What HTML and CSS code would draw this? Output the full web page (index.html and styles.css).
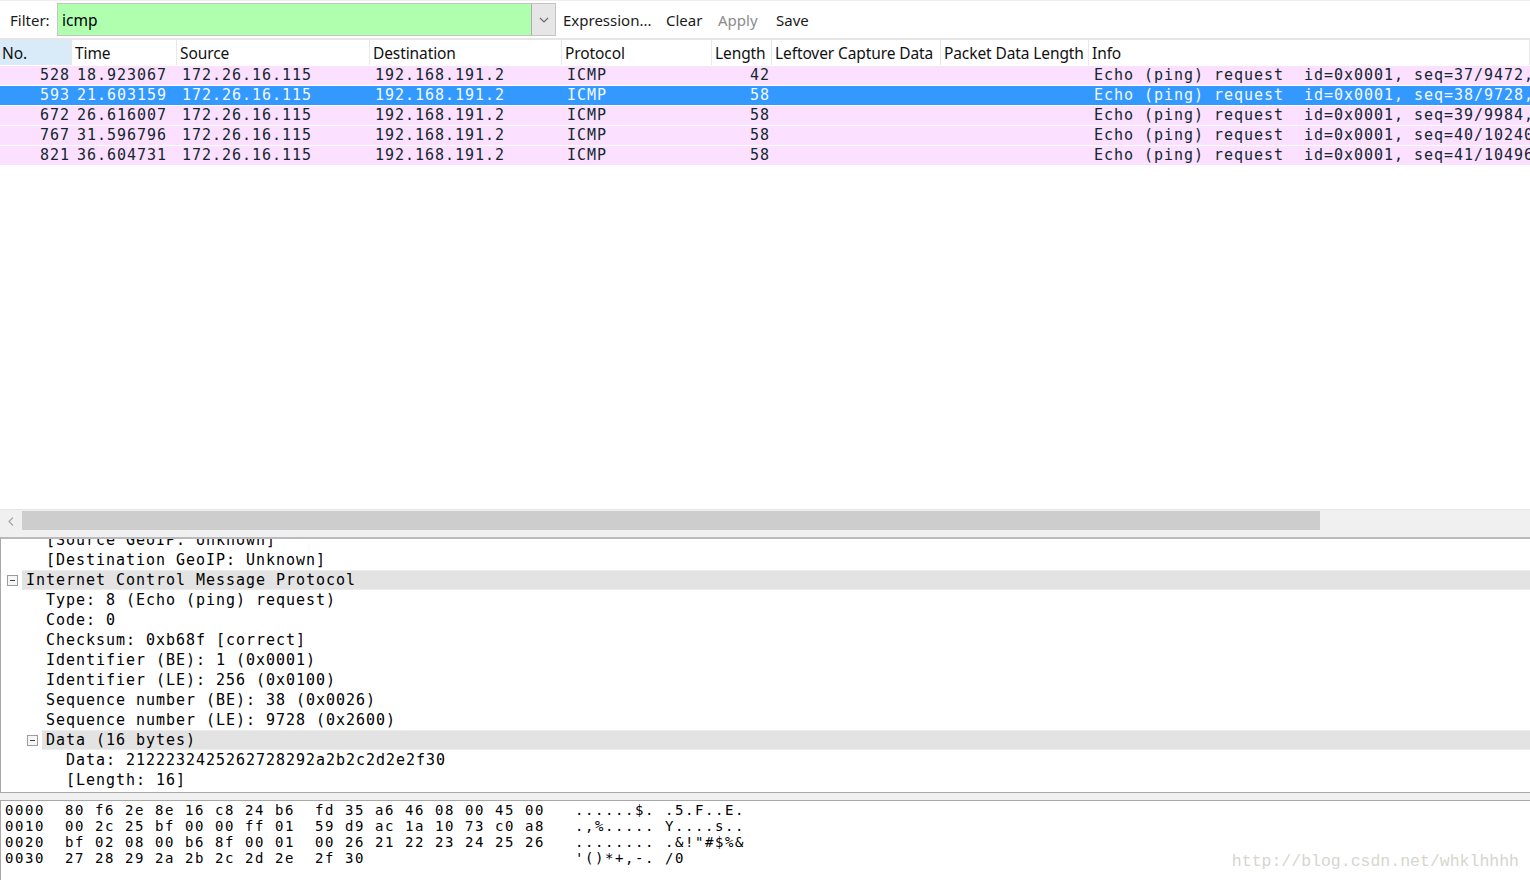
FILE: index.html
```html
<!DOCTYPE html>
<html>
<head>
<meta charset="utf-8">
<title>Wireshark</title>
<link rel="stylesheet" href="styles.css">
</head>
<body>
<div class="app">
  <div class="toolbar">
    <span class="flabel">Filter:</span>
    <div class="filter">
      <div class="finput">icmp</div>
      <div class="fdrop"><svg width="10" height="6" viewBox="0 0 10 6"><path d="M1 1 L5 5 L9 1" fill="none" stroke="#6a6a6a" stroke-width="1.2"/></svg></div>
    </div>
    <span class="tbtn w-expr">Expression...</span>
    <span class="tbtn w-clear">Clear</span>
    <span class="tbtn w-apply disabled">Apply</span>
    <span class="tbtn">Save</span>
  </div>

  <div class="plist">
    <div class="prow head">
      <div class="c sorted">No.</div>
      <div class="c">Time</div>
      <div class="c">Source</div>
      <div class="c">Destination</div>
      <div class="c">Protocol</div>
      <div class="c">Length</div>
      <div class="c">Leftover Capture Data</div>
      <div class="c">Packet Data Length</div>
      <div class="c">Info</div>
    </div>
    <div class="prow pkt">
      <div class="c r">528</div><div class="c">18.923067</div><div class="c">172.26.16.115</div><div class="c">192.168.191.2</div><div class="c">ICMP</div><div class="c r">42</div><div class="c"></div><div class="c"></div><div class="c info">Echo (ping) request  id=0x0001, seq=37/9472, ttl=64 (no response found!)</div>
    </div>
    <div class="prow pkt sel">
      <div class="c r">593</div><div class="c">21.603159</div><div class="c">172.26.16.115</div><div class="c">192.168.191.2</div><div class="c">ICMP</div><div class="c r">58</div><div class="c"></div><div class="c"></div><div class="c info">Echo (ping) request  id=0x0001, seq=38/9728, ttl=255 (no response found!)</div>
    </div>
    <div class="prow pkt">
      <div class="c r">672</div><div class="c">26.616007</div><div class="c">172.26.16.115</div><div class="c">192.168.191.2</div><div class="c">ICMP</div><div class="c r">58</div><div class="c"></div><div class="c"></div><div class="c info">Echo (ping) request  id=0x0001, seq=39/9984, ttl=255 (no response found!)</div>
    </div>
    <div class="prow pkt">
      <div class="c r">767</div><div class="c">31.596796</div><div class="c">172.26.16.115</div><div class="c">192.168.191.2</div><div class="c">ICMP</div><div class="c r">58</div><div class="c"></div><div class="c"></div><div class="c info">Echo (ping) request  id=0x0001, seq=40/10240, ttl=255 (no response found!)</div>
    </div>
    <div class="prow pkt">
      <div class="c r">821</div><div class="c">36.604731</div><div class="c">172.26.16.115</div><div class="c">192.168.191.2</div><div class="c">ICMP</div><div class="c r">58</div><div class="c"></div><div class="c"></div><div class="c info">Echo (ping) request  id=0x0001, seq=41/10496, ttl=255 (no response found!)</div>
    </div>
  </div>

  <div class="hscroll">
    <span class="arrow"><svg width="6" height="9" viewBox="0 0 6 9"><path d="M5 0.5 L1 4.5 L5 8.5" fill="none" stroke="#a6a6a6" stroke-width="1.2"/></svg></span>
    <div class="track"><div class="thumb"></div></div>
  </div>

  <div class="details">
    <div class="tree">
      <div class="tl lv1"><span class="slot"></span><span class="lbl">[Source GeoIP: Unknown]</span></div>
      <div class="tl lv1"><span class="slot"></span><span class="lbl">[Destination GeoIP: Unknown]</span></div>
      <div class="tl lv0"><span class="slot"><span class="exp"></span></span><span class="lbl hl">Internet Control Message Protocol</span></div>
      <div class="tl lv1"><span class="slot"></span><span class="lbl">Type: 8 (Echo (ping) request)</span></div>
      <div class="tl lv1"><span class="slot"></span><span class="lbl">Code: 0</span></div>
      <div class="tl lv1"><span class="slot"></span><span class="lbl">Checksum: 0xb68f [correct]</span></div>
      <div class="tl lv1"><span class="slot"></span><span class="lbl">Identifier (BE): 1 (0x0001)</span></div>
      <div class="tl lv1"><span class="slot"></span><span class="lbl">Identifier (LE): 256 (0x0100)</span></div>
      <div class="tl lv1"><span class="slot"></span><span class="lbl">Sequence number (BE): 38 (0x0026)</span></div>
      <div class="tl lv1"><span class="slot"></span><span class="lbl">Sequence number (LE): 9728 (0x2600)</span></div>
      <div class="tl lv1"><span class="slot"><span class="exp"></span></span><span class="lbl hl">Data (16 bytes)</span></div>
      <div class="tl lv2"><span class="slot"></span><span class="lbl">Data: 2122232425262728292a2b2c2d2e2f30</span></div>
      <div class="tl lv2"><span class="slot"></span><span class="lbl">[Length: 16]</span></div>
    </div>
  </div>

  <div class="gap"></div>

  <div class="bytes">
<pre class="hex">0000  80 f6 2e 8e 16 c8 24 b6  fd 35 a6 46 08 00 45 00   ......$. .5.F..E.
0010  00 2c 25 bf 00 00 ff 01  59 d9 ac 1a 10 73 c0 a8   .,%..... Y....s..
0020  bf 02 08 00 b6 8f 00 01  00 26 21 22 23 24 25 26   ........ .&amp;!&quot;#$%&amp;
0030  27 28 29 2a 2b 2c 2d 2e  2f 30                     &#39;()*+,-. /0</pre>
  </div>

  <div class="watermark">http://blog.csdn.net/whklhhhh</div>
</div>
</body>
</html>
```

FILE: styles.css
```css
* { box-sizing: border-box; margin: 0; padding: 0; }
html, body { width: 1530px; height: 880px; overflow: hidden; background: #fff; }
body {
  font-family: "Noto Sans", "Open Sans", "Liberation Sans", sans-serif;
  font-size: 15px;
  color: #000;
}
.app { position: relative; display: flex; flex-direction: column; height: 880px; width: 1530px; }

/* toolbar */
.toolbar {
  height: 40px;
  flex: 0 0 40px;
  display: flex;
  align-items: center;
  padding-left: 10px;
  border-top: 1px solid #efefef;
  border-bottom: 2px solid #e6e6e6;
}
.flabel { width: 47px; color: #1a1a1a; }
.filter {
  display: flex;
  width: 499px;
  height: 33px;
  border: 1px solid #c4c4c4;
  margin-right: 7px;
}
.finput {
  flex: 1;
  background: #afffaf;
  padding-left: 4px;
  display: flex;
  align-items: center;
  font-size: 15.5px;
  color: #000;
}
.fdrop {
  width: 24px;
  background: #e6e6e6;
  border-left: 1px solid #adadad;
  display: flex;
  align-items: center;
  justify-content: center;
}
.tbtn { display: inline-block; color: #1a1a1a; }
.w-expr { width: 103px; }
.w-clear { width: 52px; }
.w-apply { width: 58px; }
.disabled { color: #8c8c8c; }

/* packet list */
.plist { flex: 1 1 auto; overflow: hidden; }
.prow {
  display: grid;
  grid-template-columns: 72px 105px 193px 192px 150px 60px 169px 148px 1fr;
  white-space: nowrap;
}
.prow .c { overflow: hidden; }
.head { height: 26px; border-bottom: 1px solid #fff; font-size: 15.5px; letter-spacing: -0.1px; }
.head .c {
  padding-left: 3px;
  padding-top: 2px;
  line-height: 23px;
  border-right: 1px solid #e8e8e8;
  color: #111;
}
.head .c.sorted { background: #d9ebf9; padding-left: 2px; }
.pkt {
  height: 20px;
  background: #fce0ff;
  color: #12272e;
  border-bottom: 1px solid #fff;
  font-family: "DejaVu Sans Mono", "Liberation Mono", monospace;
  font-size: 15px;
  letter-spacing: 0.97px;
  line-height: 19px;
}
.pkt .c { padding-left: 5px; white-space: pre; }
.pkt .c.r { text-align: right; padding-left: 0; padding-right: 2px; }
.pkt.sel { background: #3399ff; color: #f4f8ff; }

/* horizontal scrollbar */
.hscroll {
  flex: 0 0 28px;
  display: flex;
  align-items: flex-start;
  background: #f0f0f0;
  border-top: 1px solid #e6e6e6;
  padding-top: 1px;
}
.arrow { width: 22px; height: 20px; display: flex; align-items: center; justify-content: center; }
.track { flex: 1; height: 20px; }
.thumb { width: 1298px; height: 19px; background: #cdcdcd; }

/* details tree */
.details {
  flex: 0 0 256px;
  border-top: 2px solid #b9b9be;
  border-left: 1px solid #a8a8a8;
  border-bottom: 1px solid #a8a8a8;
  overflow: hidden;
  background: #fff;
}
.tree {
  margin-top: -9px;
  font-family: "DejaVu Sans Mono", "Liberation Mono", monospace;
  font-size: 15px;
  letter-spacing: 0.97px;
  color: #000;
}
.tl { display: flex; height: 20px; line-height: 20px; white-space: pre; }
.lv0 { padding-left: 5px; }
.lv1 { padding-left: 25px; }
.lv2 { padding-left: 45px; }
.slot { width: 16px; display: flex; align-items: center; }
.lbl { padding-left: 4px; }
.lbl.hl {
  flex: 1;
  background: #e3e3e3;
  border-top: 1px solid #ececec;
  border-bottom: 1px solid #ececec;
  line-height: 18px;
}
.exp {
  position: relative;
  width: 11px;
  height: 11px;
  margin-left: 1px;
  border: 1px solid #9c9c9c;
  background: #f6f6f6;
}
.exp::after {
  content: "";
  position: absolute;
  left: 2px;
  top: 4px;
  width: 5px;
  height: 1px;
  background: #444;
}

.gap { flex: 0 0 7px; background: #f0f0f0; }

/* hex bytes */
.bytes {
  flex: 0 0 80px;
  border-top: 1px solid #a8a8a8;
  border-left: 1px solid #a8a8a8;
  overflow: hidden;
}
.hex {
  padding: 1px 0 0 4px;
  font-family: "DejaVu Sans Mono", "Liberation Mono", monospace;
  font-size: 14px;
  letter-spacing: 1.57px;
  line-height: 16px;
  color: #000;
}

.watermark {
  position: absolute;
  right: 11px;
  bottom: 9px;
  font-family: "Liberation Mono", "DejaVu Serif", monospace;
  font-size: 16.5px;
  color: #d6d6cf;
}
```
